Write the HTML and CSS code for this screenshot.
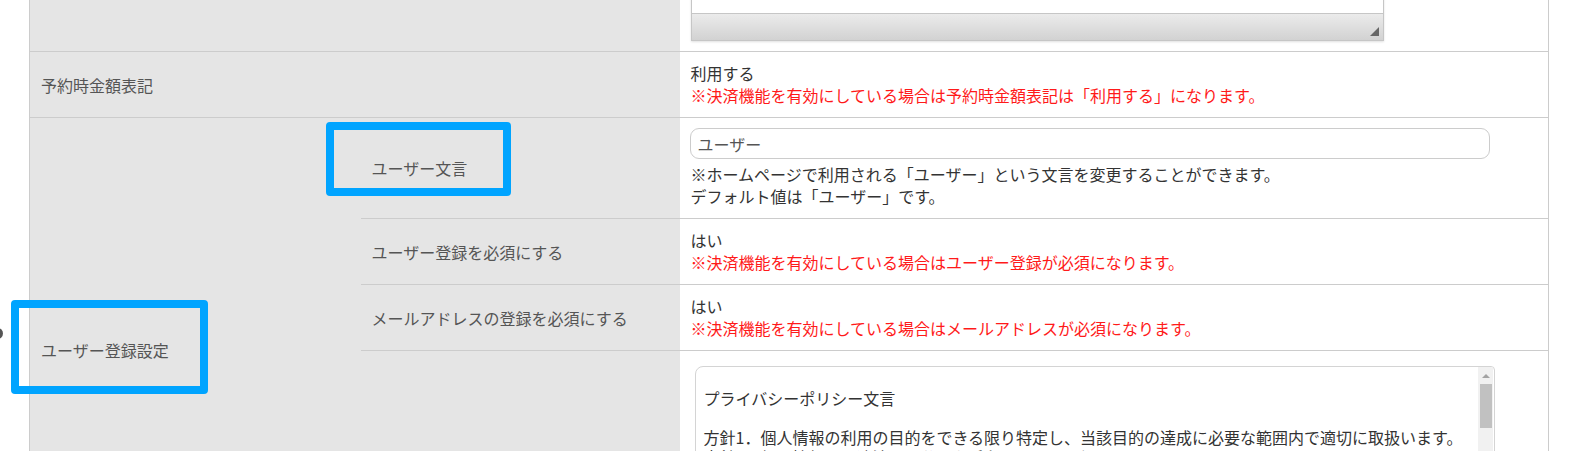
FILE: index.html
```html
<!DOCTYPE html>
<html>

<head>
  <meta charset="utf-8">
  <title>基本設定</title>
  <link rel="stylesheet" href="styles.css">
</head>
<body>
<div class="page">
  <table class="setting-table">
    <colgroup>
      <col class="col-group">
      <col class="col-label">
      <col class="col-value">
    </colgroup>
    <tr>
      <th colspan="2"></th>
      <td class="first">
        <div class="editor">
          <div class="editor-body"></div>
          <div class="editor-status"><span class="grip"></span></div>
        </div>
      </td>
    </tr>
    <tr>
      <th colspan="2">予約時金額表記</th>
      <td>
        利用する<br>
        <span class="note">※決済機能を有効にしている場合は予約時金額表記は「利用する」になります。</span>
      </td>
    </tr>
    <tr>
      <th rowspan="4" class="group">ユーザー登録設定</th>
      <th class="sub">ユーザー文言</th>
      <td>
        <input type="text" class="text-input" value="ユーザー">
        <div class="help">
          ※ホームページで利用される「ユーザー」という文言を変更することができます。<br>
          デフォルト値は「ユーザー」です。
        </div>
      </td>
    </tr>
    <tr>
      <th class="sub">ユーザー登録を必須にする</th>
      <td>
        はい<br>
        <span class="note">※決済機能を有効にしている場合はユーザー登録が必須になります。</span>
      </td>
    </tr>
    <tr>
      <th class="sub">メールアドレスの登録を必須にする</th>
      <td>
        はい<br>
        <span class="note">※決済機能を有効にしている場合はメールアドレスが必須になります。</span>
      </td>
    </tr>
    <tr>
      <th class="sub"></th>
      <td>
        <div class="policy-box">
          <div class="policy-text">
            <p>プライバシーポリシー文言</p>
            <p>方針1．個人情報の利用の目的をできる限り特定し、当該目的の達成に必要な範囲内で適切に取扱います。<br>
            方針2．個人情報は、適法かつ公正な手段によって取得いたします。</p>
          </div>
          <div class="policy-scroll">
            <span class="arrow-up"></span>
            <span class="thumb"></span>
          </div>
        </div>
      </td>
    </tr>
  </table>

  <!-- annotation frames -->
  <div class="mark mark-word"></div>
  <div class="mark mark-setting"></div>
  <span class="edge-dot"></span>
</div>
</body>

</html>
```

FILE: styles.css
```css
html, body {
    margin: 0;
    padding: 0;
    background: #fff;
    overflow: hidden;
  }
  .page {
    position: relative;
    height: 451px;
    overflow: hidden;
    font-family: "Noto Sans CJK JP", "Liberation Sans", sans-serif;
    font-size: 16px;
    line-height: 22px;
    color: #333;
  }
  .setting-table {
    margin: -60px 0 0 29px;
    width: 1520px;
    table-layout: fixed;
    border-collapse: collapse;
    border-left: 1px solid #ccc;
    border-right: 1px solid #ccc;
  }
  .col-group {
    width: 331px;
  }
  .col-label {
    width: 319px;
  }
  .setting-table th {
    background-color: #e5e5e5;
    color: #555;
    font-weight: normal;
    text-align: left;
    padding: 0 11px;
    border-bottom: 1px solid #ccc;
  }
  .setting-table th.group {
    border-bottom: none;
  }
  .setting-table td {
    background-color: #fff;
    padding: 10px 10px 11px 11px;
    border-bottom: 1px solid #ccc;
    vertical-align: top;
  }
  .setting-table td.first {
    padding-bottom: 10px;
  }
  .note {
    color: #ff1a1a;
  }
  .editor {
    width: 691px;
    border: 1px solid #c6c6c6;
    box-shadow: 0 1px 2px rgba(0, 0, 0, 0.12);
  }
  .editor-body {
    height: 62px;
    background: #fff;
  }
  .editor-status {
    position: relative;
    height: 26px;
    border-top: 1px solid #c6c6c6;
    background: linear-gradient(#ebebeb, #d2d2d2);
  }
  .grip {
    position: absolute;
    right: 4px;
    bottom: 4px;
    width: 0;
    height: 0;
    border-left: 9px solid transparent;
    border-bottom: 9px solid #666;
  }
  .text-input {
    display: block;
    box-sizing: border-box;
    width: 800px;
    height: 31px;
    margin: 0 0 0 -1px;
    padding: 0 7px;
    border: 1px solid #ccc;
    border-radius: 9px;
    font-family: inherit;
    font-size: 16px;
    color: #555;
  }
  .help {
    margin-top: 4px;
  }
  .policy-box {
    display: flex;
    box-sizing: border-box;
    width: 800px;
    height: 205px;
    margin: 5px 0 0 4px;
    border: 1px solid #d4d4d4;
    border-radius: 8px 4px 0 0;
    overflow: hidden;
  }
  .policy-text {
    flex: 1;
    padding: 22px 8px 0;
    line-height: 19.5px;
    color: #333;
  }
  .policy-text p {
    margin: 0 0 19.5px;
  }
  .policy-scroll {
    position: relative;
    width: 15px;
    margin-right: 1px;
    background: #f1f1f1;
  }
  .arrow-up {
    position: absolute;
    left: 4px;
    top: 7px;
    width: 0;
    height: 0;
    border-left: 4px solid transparent;
    border-right: 4px solid transparent;
    border-bottom: 4px solid #a3a3a3;
  }
  .thumb {
    position: absolute;
    left: 2px;
    top: 17px;
    width: 12px;
    height: 44px;
    background: #c1c1c1;
  }
  .mark {
    position: absolute;
    box-sizing: border-box;
    border: 8px solid #00a4ff;
    border-radius: 4px;
  }
  .mark-word {
    left: 326px;
    top: 122px;
    width: 185px;
    height: 74px;
  }
  .mark-setting {
    left: 11px;
    top: 300px;
    width: 197px;
    height: 94px;
  }
  .edge-dot {
    position: absolute;
    left: -8px;
    top: 328px;
    width: 11px;
    height: 11px;
    border-radius: 50%;
    background: #555;
  }
```
